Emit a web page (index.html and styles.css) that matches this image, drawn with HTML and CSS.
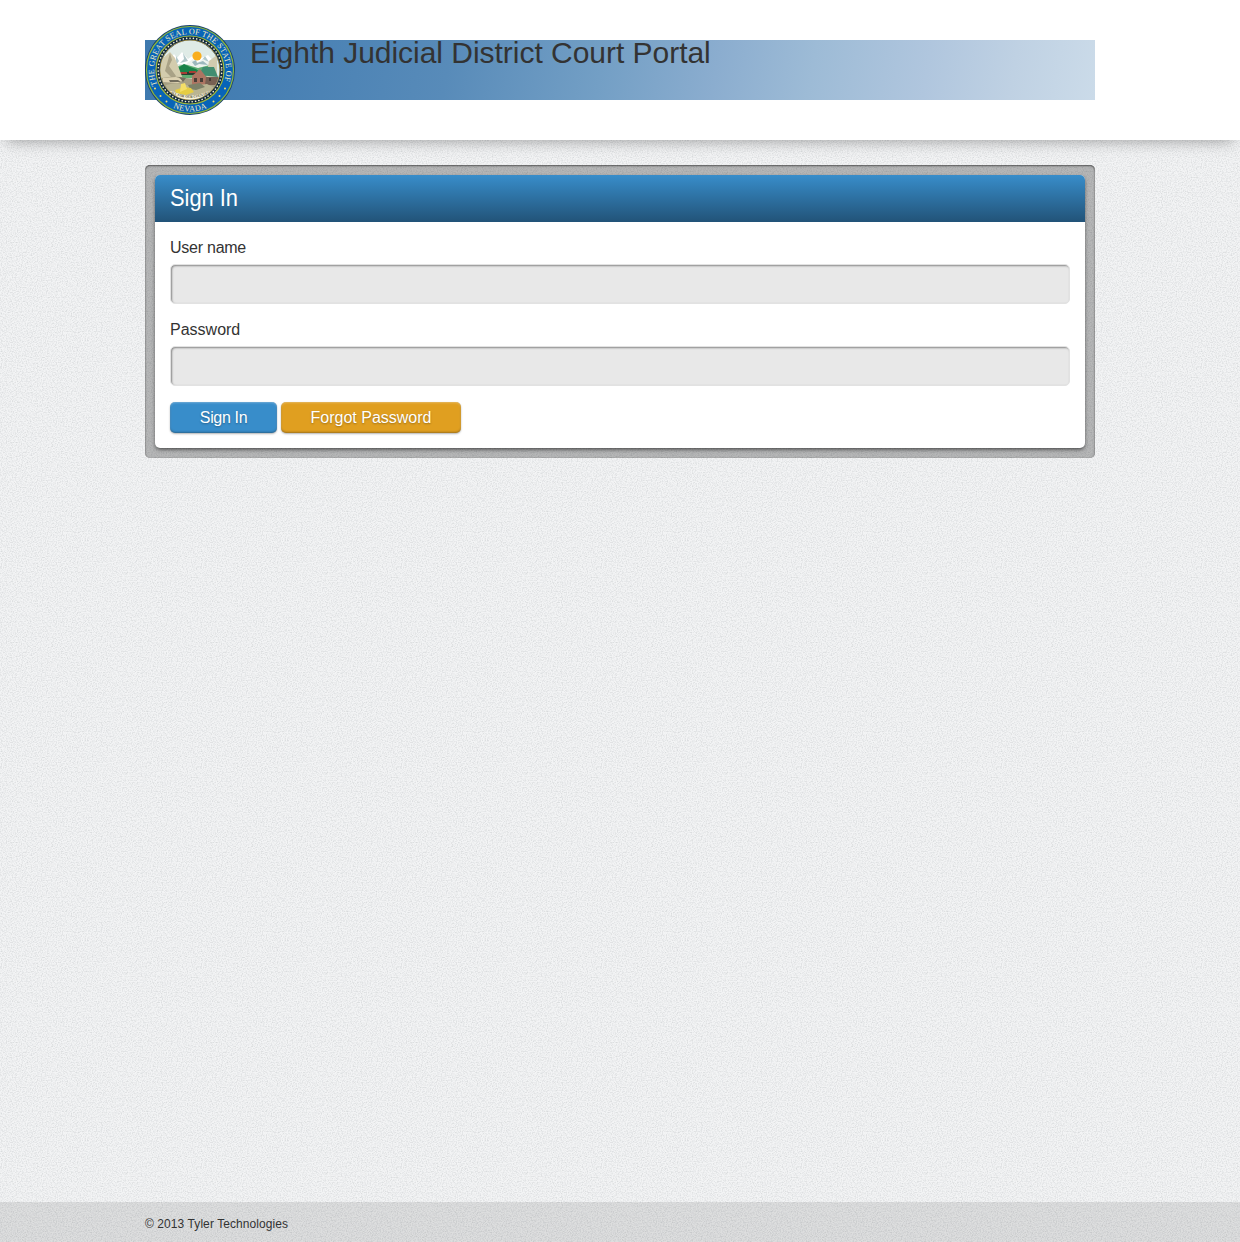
FILE: index.html
```html
<!DOCTYPE html>
<html lang="en">
<head>
<meta charset="utf-8">
<title>Eighth Judicial District Court Portal</title>
<link rel="stylesheet" href="styles.css">
</head>
<body>
<header class="site-header">
  <div class="banner">
    <svg class="seal" viewBox="0 0 90 90" role="img" aria-label="State seal">
      <defs>
        <path id="ring-top" d="M12.2 59.9A36 36 0 1 1 77.8 59.9"/>
        <path id="ring-bottom" d="M16 74.5A41.2 41.2 0 0 0 74 74.5"/>
        <path id="motto-line" d="M25 67.8Q45 78 65 67.8"/>
        <clipPath id="scene"><circle cx="45" cy="45" r="29.5"/></clipPath>
      </defs>
      <circle cx="45" cy="45" r="45" fill="#173f70"/>
      <circle cx="45" cy="45" r="43.5" fill="#0864b8" stroke="#8eb63b" stroke-width="1.2"/>
      <circle cx="45" cy="45" r="34" fill="#112b43" stroke="#a0b83c" stroke-width="1.2"/>
      <circle cx="45" cy="45" r="31.8" fill="none" stroke="#f5f0d0" stroke-width="1.6" stroke-linecap="round" stroke-dasharray=".1 3.3"/>
      <circle cx="45" cy="45" r="29.9" fill="none" stroke="#a58c3b" stroke-width=".9"/>
      <g clip-path="url(#scene)">
        <path d="M15 15h60v60H15z" fill="#dfebe6"/>
        <path d="M22 38l7-9 3 4 5-6 6 7 6-4 5 4 9-4 8 9H22z" fill="#fff"/>
        <path d="M31 31l3 5-3 4zM38 28l1 6-4 4 8-2zM60 31l-3 4 7 2z" fill="#b2c9cb"/>
        <circle cx="52" cy="31" r="4.6" fill="#f9ae1e"/>
        <path d="M42 38l6-4 5 3 5-3 11 6-5 5-20-1z" fill="#edf3ee"/>
        <path d="M47 37l4-2 1 3 6-2 5 4-9-1-4 2z" fill="#9cb8bd"/>
        <path d="M30 43q8-6 16-2l7 2 12-3 6 5v8H29z" fill="#5fae72"/>
        <path d="M33 43l6-4 6 3 6 2 5 4H32z" fill="#188249"/>
        <path d="M31 47h24v3H31z" fill="#263f31"/>
        <path d="M33 47h9v2h-9zM44 46h7v2h-7z" fill="#a93e35"/>
        <path d="M15 36l10-9 5 6 8 21-10 3-13-3z" fill="#d3ccad"/>
        <path d="M25 28l2 7-3 6 7 10-3 3-8-8z" fill="#a9a286"/>
        <path d="M64 36l8-6v31l-11-7 2-12z" fill="#d1cbb0"/>
        <path d="M17 53q12-3 24 0l33 3v18H16z" fill="#a69f83"/>
        <path d="M18 53l13-1 8 3-6 3-15-1z" fill="#ddd2b2"/>
        <path d="M24 55h9l3 2H25zM34 52l7 1-3 4z" fill="#716d5d"/>
        <path d="M54 50l4-8h11l4 10z" fill="#418d70"/>
        <path d="M47 51l8-7 7 9v7H47z" fill="#ad7562"/>
        <path d="M61 52h12v8H60z" fill="#776052"/>
        <path d="M49 53h3v4h-3zM55 53h3v4h-3zM64 53h2v3h-2z" fill="#4a3e37"/>
        <path d="M21 60q13-4 24 1l17-2 10 5-8 8H23z" fill="#b9b492"/>
        <path d="M43 60l12-2 5 4-9 3-6-1z" fill="#7d8168"/>
        <path d="M30 65l9-3 7 1 3 4-8 3-10-2z" fill="#e5cd43"/>
        <path d="M36 59l4-1 2 6-7 3z" fill="#f4df67"/>
        <path d="M22 67l5-1q18 9 36 0l4 2-3 6q-19 8-38 0z" fill="#f8f2d7"/>
      </g>
      <text class="seal-name"><textPath href="#ring-top" textLength="139" startOffset="0">THE GREAT SEAL OF THE STATE OF</textPath></text>
      <text class="seal-name"><textPath href="#ring-bottom" startOffset="50%" text-anchor="middle" textLength="35">NEVADA</textPath></text>
      <text class="seal-motto"><textPath href="#motto-line" startOffset="50%" text-anchor="middle">ALL FOR OUR COUNTRY</textPath></text>
      <g fill="#f4df70"><circle cx="10" cy="63.5" r="1"/><circle cx="15.5" cy="71" r="1"/><circle cx="21.5" cy="76.5" r="1"/><circle cx="68.5" cy="76.5" r="1"/><circle cx="74.5" cy="71" r="1"/><circle cx="80" cy="63.5" r="1"/></g>
    </svg>
    <h1 class="site-title">Eighth Judicial District Court Portal</h1>
  </div>
</header>
<main class="content">
  <section class="panel">
    <form class="card">
      <h2 class="card-title"><span class="card-title-text">Sign In</span></h2>
      <div class="card-body">
        <label class="label label-user" for="user">User name</label>
        <input class="field" id="user" type="text">
        <label class="label" for="password">Password</label>
        <input class="field" id="password" type="password">
        <div class="actions">
          <button class="button button-primary" type="button">Sign In</button>
          <button class="button button-warning" type="button">Forgot Password</button>
        </div>
      </div>
    </form>
  </section>
</main>
<footer class="site-footer"><div class="footer-inner">© 2013 Tyler Technologies</div></footer>
</body>
</html>
```
FILE: styles.css
```css
* { box-sizing: border-box; }
body {
  margin: 0;
  min-height: 1242px;
  display: flex;
  flex-direction: column;
  color: #333;
  font-family: "Liberation Sans", Arial, sans-serif;
  font-size: 16px;
  background: #f3f4f5 url("data:image/svg+xml,%3Csvg xmlns='http://www.w3.org/2000/svg' width='200' height='200'%3E%3Cfilter id='n' x='0' y='0' width='100%25' height='100%25' color-interpolation-filters='sRGB'%3E%3CfeTurbulence type='fractalNoise' baseFrequency='.8' numOctaves='2' stitchTiles='stitch'/%3E%3CfeColorMatrix values='0 0 0 0 .4 0 0 0 0 .43 0 0 0 0 .45 .4 0 0 0 -.155'/%3E%3C/filter%3E%3Crect width='200' height='200' filter='url(%23n)'/%3E%3C/svg%3E");
}
.site-header {
  height: 140px;
  padding-top: 40px;
  background: #fff;
  box-shadow: 0 8px 14px -7px rgba(0, 0, 0, .34);
}
.banner, .content, .footer-inner { width: 950px; margin: 0 auto; }
.banner {
  display: flex;
  height: 60px;
  background: linear-gradient(100deg, #3e79ae 0%, #467fb3 13%, #588bb9 32%, #739fc5 48%, #8badcf 60%, #9dbbd6 70%, #b0c6de 82%, #bfd1e3 91%, #cbdbe9 100%);
}
.seal { flex: 0 0 90px; width: 90px; height: 90px; margin-top: -15px; }
.seal-name { fill: #f5edc0; font: 400 8.2px "Liberation Serif", serif; }
.seal-motto { fill: #494937; font: 700 3.4px "Liberation Serif", serif; }
.site-title { margin: -6px 0 0 15px; font-size: 30px; line-height: 37px; font-weight: 400; letter-spacing: -.03px; white-space: nowrap; }
.content { flex: 1; padding-top: 25px; }
.panel {
  padding: 10px;
  border-radius: 5px;
  background: rgba(0, 0, 0, .25);
  box-shadow: inset 0 1px 2px rgba(0, 0, 0, .5), inset 0 0 1px rgba(0, 0, 0, .3);
}
.card { height: 273px; border-radius: 5px; background: #fff; box-shadow: 0 2px 4px -1px rgba(0, 0, 0, .7); }
.card-title {
  height: 47px;
  margin: 0;
  padding: 0 15px;
  border-radius: 5px 5px 0 0;
  background: linear-gradient(#388dca, #225378);
  color: #fff;
  font-size: 24px;
  line-height: 45px;
  font-weight: 400;
}
.card-title-text { display: inline-block; transform: scaleX(.91); transform-origin: left; }
.card-body { padding: 15px; }
.label { display: block; height: 27px; padding-top: 1px; line-height: 20px; }
.label-user { letter-spacing: -.25px; }
.field {
  display: block;
  width: 100%;
  height: 40px;
  margin: 0 0 15px;
  padding: 8px;
  border: 1px solid #e2e2e2;
  border-radius: 5px;
  outline: 0;
  background: #e8e8e8;
  box-shadow: inset 1px 1px 2px rgba(0, 0, 0, .42);
  font: inherit;
}
.actions { display: flex; gap: 4px; padding-top: 1px; }
.button {
  height: 31px;
  padding: 0;
  border: 0;
  border-radius: 5px;
  color: #fff;
  font: inherit;
  line-height: 31px;
  text-shadow: 0 1px 2px rgba(0, 0, 0, .3);
  box-shadow: inset 0 1px 2px rgba(255, 255, 255, .3), inset 0 -1px 2px rgba(0, 0, 0, .3), 0 1px 2px rgba(0, 0, 0, .3);
}
.button-primary { width: 107px; background: #388dca; letter-spacing: -.35px; }
.button-warning { width: 180px; background: #e09f20; }
.site-footer { height: 40px; background: rgba(0, 0, 0, .09); font-size: 12px; line-height: 44px; letter-spacing: .08px; }
```
